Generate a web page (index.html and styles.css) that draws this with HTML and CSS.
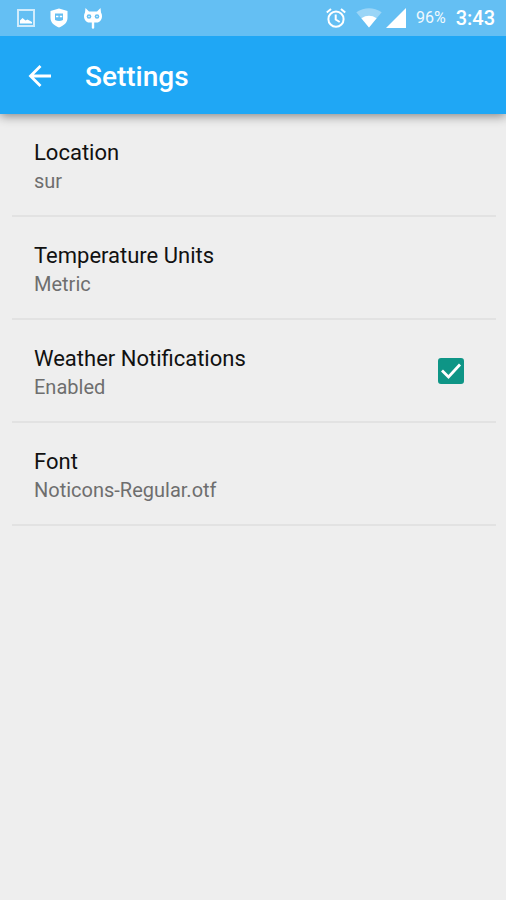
FILE: index.html
```html
<!DOCTYPE html>
<html lang="en">
<head>
<meta charset="utf-8">
<meta name="viewport" content="width=device-width, initial-scale=1">
<title>Settings</title>
<link rel="stylesheet" href="styles.css">
</head>
<body>
<div class="status-bar">
  <div class="status-left">
    <svg class="icon-picture" viewBox="0 0 18 18" aria-hidden="true">
      <rect x="1" y="1" width="16" height="16" fill="none" stroke="currentColor" stroke-width="2" opacity=".7"/>
      <path d="M3 14.500v-3l2.500-2.500 3 2.500 2-1 4.500 2.500v1.500z" fill="currentColor"/>
    </svg>
    <svg class="icon-shield" viewBox="0 0 18 20" aria-hidden="true">
      <path d="M9 .5l8.500 2.500v7c0 4.500-3.500 7.500-8.500 9.500-5-2-8.500-5-8.500-9.500V3z" fill="currentColor"/>
      <path d="M5 5.500h8v6.500q-4 2-8 0z" fill="#64bff3"/>
      <path d="M6 8.500h2.400M9.800 8.500h2.400" stroke="currentColor" stroke-width="1.400"/>
    </svg>
    <svg class="icon-cid" viewBox="0 0 20 22" aria-hidden="true">
      <path d="M2.500 1l3.500 3.500h8l3.500-3.500 .5 4.500q1 1.500 1 3.500c0 4-2.500 6.500-5 6.500h-8c-2.500 0-5-2.500-5-6.500q0-2 1-3.500z" fill="currentColor"/>
      <circle cx="6" cy="9.500" r="2.300" fill="#64bff3"/>
      <circle cx="14" cy="9.500" r="2.300" fill="#64bff3"/>
      <circle cx="6" cy="9.500" r=".7" fill="currentColor"/>
      <circle cx="14" cy="9.500" r=".7" fill="currentColor"/>
      <path d="M10 15v5.500" stroke="currentColor" stroke-width="2.400" stroke-linecap="round"/>
    </svg>
  </div>
  <div class="status-right">
    <svg class="icon-alarm" viewBox="0 0 20 20" aria-hidden="true">
      <g fill="none" stroke="currentColor" stroke-width="2">
        <circle cx="10" cy="11.200" r="7.600"/>
        <path d="M.800 4.600l4.200-3.500M19.200 4.600L15 1.100M9.700 6.500v5l4 2.500"/>
      </g>
    </svg>
    <svg class="icon-wifi" viewBox="0 0 26 20" aria-hidden="true">
      <path d="M13 19.500L.300 4.200Q13-3.800 25.700 4.200z" fill="currentColor" opacity=".35"/>
      <path d="M13 19.500L5.400 10.200Q13 5.500 20.600 10.200z" fill="currentColor"/>
    </svg>
    <svg class="icon-signal" viewBox="0 0 20 20" aria-hidden="true"><path d="M20 0v20H0z" fill="currentColor"/></svg>
    <span class="battery">96%</span>
    <span class="clock">3:43</span>
  </div>
</div>
<header class="app-bar">
  <button class="back" type="button" aria-label="Back">
    <svg viewBox="0 0 24 24" aria-hidden="true"><path d="M23 11H3M12.500 1L2.500 11l10 10" fill="none" stroke="currentColor" stroke-width="2.800"/></svg>
  </button>
  <h1>Settings</h1>
</header>
<main class="preferences">
  <button class="preference" type="button">
    <span class="texts"><span class="title">Location</span><span class="summary">sur</span></span>
  </button>
  <button class="preference" type="button">
    <span class="texts"><span class="title">Temperature Units</span><span class="summary">Metric</span></span>
  </button>
  <label class="preference" for="notifications">
    <span class="texts"><span class="title">Weather Notifications</span><span class="summary">Enabled</span></span>
    <span class="check">
      <input id="notifications" type="checkbox" checked>
      <svg viewBox="0 0 26 26" aria-hidden="true"><path d="M4 12.500l6.500 6.500L22 6.500" fill="none" stroke="#fff" stroke-width="2.800"/></svg>
    </span>
  </label>
  <button class="preference" type="button">
    <span class="texts"><span class="title">Font</span><span class="summary">Noticons-Regular.otf</span></span>
  </button>
</main>
</body>
</html>
```
FILE: styles.css
```css
* {
  box-sizing: border-box;
}

body {
  margin: 0;
  min-height: 100vh;
  background: #eee;
  color: #111;
  font-family: Roboto, "Liberation Sans", sans-serif;
}

svg {
  display: block;
}

.status-bar {
  position: relative;
  z-index: 1;
  display: flex;
  justify-content: space-between;
  align-items: center;
  height: 36px;
  padding: 0 11px 0 17px;
  background: #64bff3;
  color: #fff;
}

.status-left,
.status-right {
  display: flex;
  align-items: center;
}

.status-left {
  gap: 15px;
}

.icon-picture {
  width: 18px;
  height: 18px;
}

.icon-shield {
  width: 18px;
  height: 20px;
}

.icon-cid {
  width: 20px;
  height: 22px;
}

.icon-alarm,
.icon-signal {
  width: 20px;
  height: 20px;
}

.icon-wifi {
  width: 26px;
  height: 20px;
  margin-left: 10px;
}

.icon-signal {
  margin-left: 4px;
}

.battery {
  margin-left: 10px;
  font-size: 16px;
  line-height: 38px;
  opacity: .9;
}

.clock {
  margin-left: 10px;
  font-size: 20px;
  font-weight: 500;
  line-height: 38px;
}

.app-bar {
  display: flex;
  align-items: center;
  gap: 33px;
  height: 78px;
  padding: 4px 28px 0;
  background: #1fa7f5;
  color: #fff;
  box-shadow: 0 2px 10px rgba(0, 0, 0, .45);
}

.back {
  padding: 0;
  border: 0;
  background: none;
  color: inherit;
  cursor: pointer;
}

.back svg {
  width: 24px;
  height: 24px;
}

h1 {
  margin: 0;
  font-size: 28px;
  font-weight: 500;
  line-height: 32px;
}

.preferences {
  display: flex;
  flex-direction: column;
  padding: 0 10px 0 12px;
}

.preference {
  display: flex;
  justify-content: space-between;
  align-items: center;
  min-height: 103px;
  padding: 0 32px 0 22px;
  border: 0;
  border-bottom: 2px solid #e2e2e2;
  background: none;
  color: inherit;
  font: inherit;
  text-align: left;
  cursor: pointer;
}

.texts {
  display: flex;
  flex-direction: column;
  padding-top: 5px;
}

.title {
  font-size: 22px;
  line-height: 28px;
}

.summary {
  color: #6e6e6e;
  font-size: 20px;
  line-height: 28px;
}

.check {
  display: grid;
}

.check input,
.check svg {
  grid-area: 1 / 1;
  width: 26px;
  height: 26px;
  margin: 0;
}

.check input {
  appearance: none;
  border: 2px solid #757575;
  border-radius: 3px;
  cursor: pointer;
}

.check input:checked {
  border-color: #0e9586;
  background: #0e9586;
}

.check svg {
  visibility: hidden;
  pointer-events: none;
}

.check input:checked + svg {
  visibility: visible;
}
```
